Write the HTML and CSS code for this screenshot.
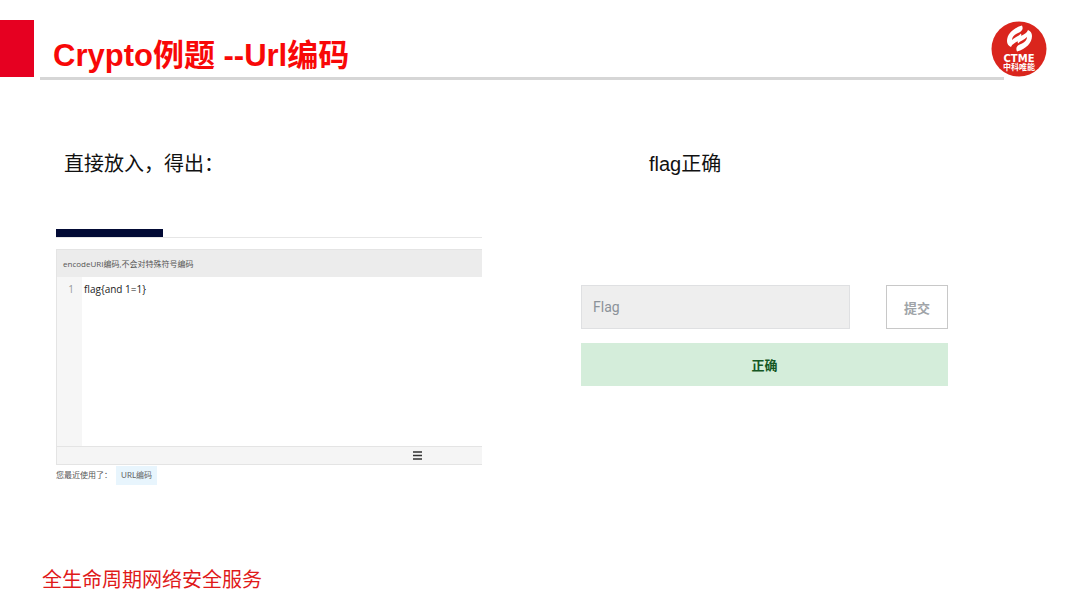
FILE: index.html
```html
<!DOCTYPE html>
<html lang="zh-CN">
<head>
<meta charset="UTF-8">
<title>Crypto例题 --Url编码</title>
<link rel="stylesheet" href="styles.css">
</head>
<body>
	<!-- 页眉：红色方块、标题、logo -->
	<header class="header">
		<div class="mark"></div>
		<div class="title_bar">
			<h1>Crypto例题 --Url编码</h1>
		</div>
		<svg class="logo" viewBox="0 0 56 56" role="img" aria-label="CTME 中科唯能">
			<circle cx="28" cy="28" r="27.500" fill="#da251d"/>
			<!-- 两片旋转对称的飘带 -->
			<g fill="#fff">
				<path d="M31 4.500 C22 7 16 13 16 20 C16 23 17.500 25 20 26 C21 23 24 22 27 20 C30 18 31 16 30 12.500 C28 15 24 16 21 19 C21 16 23 14 26 12.500 C30 11 33 9 31 4.500Z"/>
			</g>
			<g fill="#fff" transform="rotate(180 28.500 17.500)">
				<path d="M31 4.500 C22 7 16 13 16 20 C16 23 17.500 25 20 26 C21 23 24 22 27 20 C30 18 31 16 30 12.500 C28 15 24 16 21 19 C21 16 23 14 26 12.500 C30 11 33 9 31 4.500Z"/>
			</g>
			<text class="logo_en" x="28" y="41" text-anchor="middle">CTME</text>
			<text class="logo_cn" x="28" y="49" text-anchor="middle">中科唯能</text>
		</svg>
	</header>

	<main class="content">
		<section class="left">
			<h2>直接放入，得出：</h2>
			<div class="tabs"><div class="tab_on"></div></div>
			<div class="editor">
				<label class="editor_head" for="code">encodeURI编码,不会对特殊符号编码</label>
				<div class="editor_body">
					<span class="line_num">1</span>
					<textarea id="code" spellcheck="false">flag{and 1=1}</textarea>
				</div>
				<div class="editor_foot">
					<svg class="grip" viewBox="0 0 9 9" aria-hidden="true">
						<path d="M0 1h9M0 4.500h9M0 8h9" stroke="#333" stroke-width="1.500"/>
					</svg>
				</div>
			</div>
			<p class="recent">您最近使用了：<a class="tag" href="#">URL编码</a></p>
		</section>

		<section class="right">
			<h2>flag正确</h2>
			<form class="flag_form">
				<input class="flag_input" type="text" placeholder="Flag" aria-label="Flag">
				<button class="submit" type="button">提交</button>
			</form>
			<div class="result">正确</div>
		</section>
	</main>

	<footer class="footer">全生命周期网络安全服务</footer>
</body>
</html>
```
FILE: styles.css
```css
*{
	box-sizing: border-box;
}
body{
	margin: 0;
	min-height: 100vh;
	display: flex;
	flex-direction: column;
	background: #fff;
	color: #111;
	font-family: "Liberation Sans", "Noto Sans CJK SC", sans-serif;
}
h1,h2,p{
	margin: 0;
}
.header{
	display: flex;
	align-items: flex-start;
	padding: 20px 33px 0 0;
}
.mark{
	width: 34px;
	height: 57px;
	background: #e60021;
}
.title_bar{
	flex: 1;
	margin-left: 6px;
	margin-right: -13px;
	height: 60px;
	padding: 13px 13px 0;
	border-bottom: 3px solid #d6d6d6;
}
.title_bar h1{
	color: #f80808;
	font-size: 31px;
	line-height: 46px;
}
.logo{
	width: 56px;
	height: 56px;
	margin-top: 1px;
}
.logo_en{
	fill: #fff;
	font-family: "DejaVu Sans", sans-serif;
	font-size: 10px;
	font-weight: bold;
}
.logo_cn{
	fill: #fff;
	font-size: 8px;
	font-weight: bold;
}
.content{
	flex: 1;
	display: grid;
	grid-template-columns: 426fr 367fr;
	column-gap: 99px;
	padding: 69px 132px 0 56px;
}
h2{
	font-size: 20px;
	line-height: 30px;
	font-weight: normal;
}
.left h2{
	padding-left: 8px;
}
.tabs{
	margin-top: 50px;
	border-bottom: 1px solid #e6e6e6;
}
.tab_on{
	width: 25%;
	height: 8px;
	background: #020a35;
}
.editor{
	margin-top: 11px;
	border: 1px solid #e4e4e4;
	border-right: none;
	font-family: "Open Sans", "Noto Sans CJK SC", sans-serif;
}
.editor_head{
	display: block;
	height: 27px;
	padding-left: 6px;
	background: #ececec;
	color: #555;
	font-size: 8px;
	line-height: 28px;
}
.editor_body{
	display: flex;
	height: 169px;
}
.line_num{
	width: 25px;
	padding: 4px 8px 0 0;
	background: #f6f6f6;
	color: #999;
	font-size: 10px;
	line-height: 16px;
	text-align: right;
}
.editor_body textarea{
	flex: 1;
	padding: 4px 2px;
	border: none;
	outline: none;
	resize: none;
	background: #fff;
	color: #222;
	font-family: inherit;
	font-size: 10px;
	line-height: 16px;
}
.editor_foot{
	height: 18px;
	padding: 4px 60px 0 0;
	border-top: 1px solid #e4e4e4;
	background: #f5f5f5;
}
.grip{
	display: block;
	width: 9px;
	height: 9px;
	margin-left: auto;
}
.recent{
	display: flex;
	align-items: center;
	margin-top: 1px;
	color: #555;
	font-family: Lato, "Noto Sans CJK SC", sans-serif;
	font-size: 8px;
	line-height: 19px;
}
.tag{
	margin-left: 4px;
	padding: 0 5px;
	background: #e8f5fd;
	color: #666;
	text-decoration: none;
}
.right h2{
	padding-left: 68px;
}
.flag_form{
	display: flex;
	gap: 36px;
	margin-top: 106px;
}
.flag_input{
	flex: 1;
	min-width: 0;
	height: 44px;
	padding: 0 11px;
	border: 1px solid #dfe0e2;
	background: #eee;
	font-family: Roboto, sans-serif;
	font-size: 14px;
}
.flag_input::placeholder{
	color: #8b9299;
}
.submit{
	width: 62px;
	height: 44px;
	padding: 0;
	border: 1px solid #c8c8c8;
	background: #fff;
	color: #a0a4a8;
	font-family: "Noto Sans CJK SC", sans-serif;
	font-size: 13px;
	font-weight: bold;
}
.result{
	margin-top: 14px;
	background: #d4edda;
	color: #155724;
	font-family: "Noto Sans CJK SC", sans-serif;
	font-size: 13px;
	font-weight: bold;
	line-height: 43px;
	text-align: center;
}
.footer{
	padding: 0 42px 13px;
	color: #e01a1a;
	font-size: 20px;
	line-height: 30px;
}
```
